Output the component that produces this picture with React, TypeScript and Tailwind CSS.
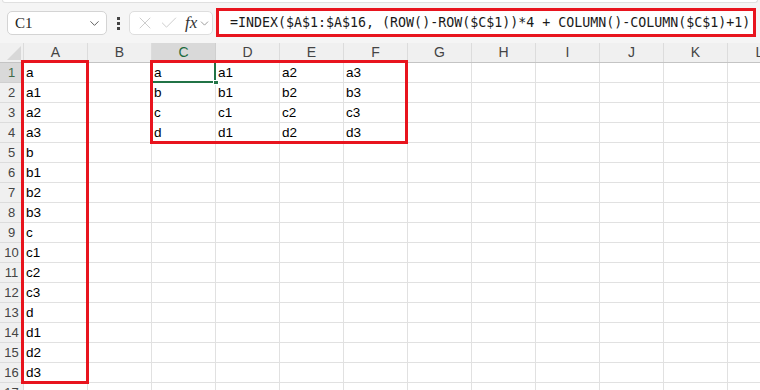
import { Check, ChevronDown, X } from 'lucide-react'

const COLS = ['A', 'B', 'C', 'D', 'E', 'F', 'G', 'H', 'I', 'J', 'K', 'L']

// Column A holds the source list, C1:F4 the reshaped 4x4 block
const COL_A = ['a', 'a1', 'a2', 'a3', 'b', 'b1', 'b2', 'b3', 'c', 'c1', 'c2', 'c3', 'd', 'd1', 'd2', 'd3']
const BLOCK = [
  ['a', 'a1', 'a2', 'a3'],
  ['b', 'b1', 'b2', 'b3'],
  ['c', 'c1', 'c2', 'c3'],
  ['d', 'd1', 'd2', 'd3'],
]

const FORMULA = '=INDEX($A$1:$A$16, (ROW()-ROW($C$1))*4 + COLUMN()-COLUMN($C$1)+1)'

function cellValue(row: number, col: number) {
  if (col === 0) return COL_A[row] ?? ''
  if (col >= 2 && col <= 5 && row < 4) return BLOCK[row][col - 2]
  return ''
}

function Toolbar() {
  return (
    <div className="flex items-start h-[40px] pl-[7px]">
      {/* Name box */}
      <div className="mt-[8px] w-[100px] h-[24px] shrink-0 flex items-center justify-between pl-[7px] pr-[4px] bg-white border border-[#d4d4d4] rounded-[5px]">
        <span className="text-[15px] text-[#222] font-['Liberation_Serif',serif]">C1</span>
        <ChevronDown className="w-[15px] h-[15px] text-[#555]" strokeWidth={1.5} />
      </div>
      <div className="mt-[11px] w-[22px] h-[18px] shrink-0 flex flex-col items-center justify-center gap-[2px]">
        <span className="w-[3px] h-[3px] bg-[#444]" />
        <span className="w-[3px] h-[3px] bg-[#444]" />
        <span className="w-[3px] h-[3px] bg-[#444]" />
      </div>
      {/* Cancel / enter / fx */}
      <div className="mt-[8px] w-[84px] h-[24px] shrink-0 flex items-center pl-[5px] bg-white border border-[#dedede] rounded-[5px]">
        <X className="w-[20px] h-[20px] text-[#c8c8c8]" strokeWidth={1.1} />
        <Check className="ml-[4px] w-[20px] h-[20px] text-[#c8c8c8]" strokeWidth={1.1} />
        <span className="ml-[6px] text-[17px] leading-[20px] italic text-[#333] font-['Liberation_Serif',serif]">fx</span>
        <ChevronDown className="ml-[1px] w-[13px] h-[13px] text-[#888]" strokeWidth={1.5} />
      </div>
      {/* Formula bar */}
      <div className="mt-[5px] ml-[3px] w-[540px] h-[29px] shrink-0 flex items-center pl-[11px] bg-white border-[3px] border-[#e8141e]">
        <span className="text-[13.3px] text-[#1a1a1a] whitespace-nowrap font-['DejaVu_Sans_Mono',monospace]">{FORMULA}</span>
      </div>
    </div>
  )
}

function HeaderRow() {
  return (
    <div className="flex h-[20px] border-b border-[#c4c4c4] bg-[#f0f0f0]">
      <div className="relative w-[24px] shrink-0 border-r border-[#dcdcdc]">
        <div className="absolute right-[2px] bottom-[2px] w-0 h-0 border-l-[14px] border-l-transparent border-b-[14px] border-b-[#d8d8d8]" />
      </div>
      {COLS.map((c) => (
        <div
          key={c}
          className={
            c === 'C'
              ? 'w-[64px] shrink-0 flex items-center justify-center border-r border-[#cfcfcf] bg-[#d9d9d9] text-[#1c6b3e] text-[14px] shadow-[inset_0_-2px_0_#217346]'
              : 'w-[64px] shrink-0 flex items-center justify-center border-r border-[#dcdcdc] text-[#444] text-[14px]'
          }
        >
          {c}
        </div>
      ))}
    </div>
  )
}

function GridRow({ row }: { row: number }) {
  const selected = row === 0
  return (
    <div className="flex h-[20px]">
      <div
        className={
          selected
            ? 'w-[24px] shrink-0 flex items-center justify-center border-r border-b border-[#cfcfcf] bg-[#d9d9d9] text-[#3f6b4a] text-[13px]'
            : 'w-[24px] shrink-0 flex items-center justify-center border-r border-b border-[#dcdcdc] bg-[#f0f0f0] text-[#444] text-[13px]'
        }
      >
        {row + 1}
      </div>
      {COLS.map((c, i) => (
        <div
          key={c}
          className="w-[64px] shrink-0 flex items-end pl-[2px] pb-[1px] border-r border-b border-[#e1e1e1] bg-white text-[13.5px] leading-[17px] text-black"
        >
          {cellValue(row, i)}
        </div>
      ))}
    </div>
  )
}

export default function App() {
  return (
    <div className="w-[760px] h-[390px] overflow-hidden bg-[#f5f5f5] font-['Liberation_Sans',Arial,sans-serif]">
      <div className="mx-[2px] h-[3px] bg-white border-x border-b border-[#e0e0e0] rounded-b-[6px]" />
      <Toolbar />
      <div className="relative">
        <HeaderRow />
        {Array.from({ length: 17 }, (_, r) => (
          <GridRow key={r} row={r} />
        ))}

        {/* active cell C1 */}
        <div className="absolute left-[151px] top-[19px] w-[65px] h-[21px] border-r-2 border-b-2 border-[#217346]" />
        <div className="absolute left-[213px] top-[37px] w-[6px] h-[5px] bg-[#217346] border border-white" />

        {/* red highlight boxes */}
        <div className="absolute left-[21px] top-[17px] w-[68px] h-[324px] border-[3px] border-[#e8141e]" />
        <div className="absolute left-[150px] top-[17px] w-[258px] h-[84px] border-[3px] border-[#e8141e]" />
      </div>
    </div>
  )
}
